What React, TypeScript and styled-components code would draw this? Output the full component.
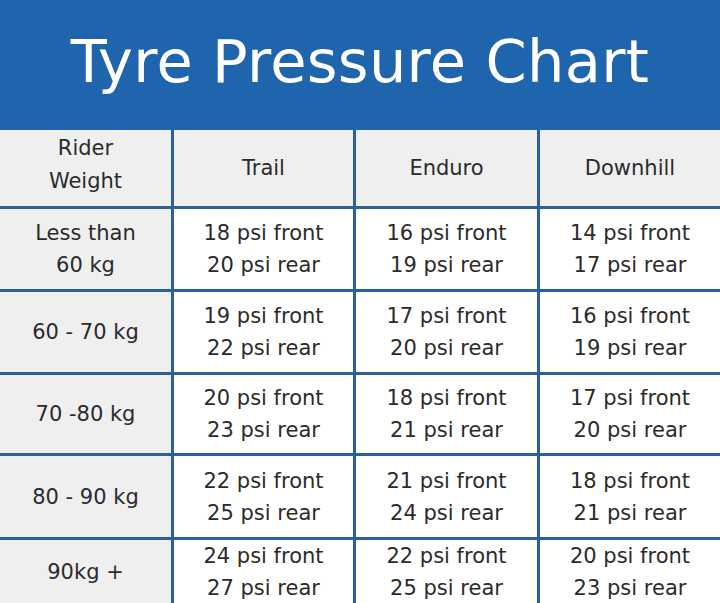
import React from "react";
import styled, { createGlobalStyle } from "styled-components";

const GlobalStyle = createGlobalStyle`
  html, body { margin: 0; padding: 0; background: #ffffff; }
  body { font-family: "DejaVu Sans", "Liberation Sans", sans-serif; }
  #root { width: 720px; height: 603px; overflow: hidden; }
`;

const Page = styled.div`
  width: 720px;
  height: 603px;
  display: flex;
  flex-direction: column;
  overflow: hidden;
`;

const TitleBar = styled.header`
  height: 130px;
  flex: none;
  background: #1e65ae;
  display: flex;
  align-items: center;
  justify-content: center;
  padding-bottom: 8px;
  box-sizing: border-box;
`;

const Title = styled.h1`
  margin: 0;
  color: #ffffff;
  font-size: 59px;
  font-weight: 400;
  letter-spacing: 0.3px;
  line-height: 1;
`;

const Grid = styled.div`
  display: grid;
  grid-template-columns: 171px 179px 181px 180px;
  grid-template-rows: 76px 80px 80px 78px 81px 63px;
  gap: 3px;
  background: #2a609c;
  flex: none;
`;

const Cell = styled.div<{ $shaded?: boolean; $tight?: boolean }>`
  background: ${(p) => (p.$shaded ? "#efeff0" : "#ffffff")};
  color: #2b2b2b;
  font-size: 21px;
  line-height: ${(p) => (p.$tight ? "33px" : "32px")};
  display: flex;
  flex-direction: column;
  align-items: center;
  justify-content: center;
  text-align: center;
  white-space: nowrap;
  padding-bottom: ${(p) => (p.$tight ? "6px" : "0")};
  box-sizing: border-box;
`;

const headers = ["Trail", "Enduro", "Downhill"];

const rows: { weight: string[]; values: [number, number][] }[] = [
  { weight: ["Less than", "60 kg"], values: [[18, 20], [16, 19], [14, 17]] },
  { weight: ["60 - 70 kg"], values: [[19, 22], [17, 20], [16, 19]] },
  { weight: ["70 -80 kg"], values: [[20, 23], [18, 21], [17, 20]] },
  { weight: ["80 - 90 kg"], values: [[22, 25], [21, 24], [18, 21]] },
  { weight: ["90kg +"], values: [[24, 27], [22, 25], [20, 23]] },
];

export default function App() {
  return (
    <>
      <GlobalStyle />
      <Page>
        <TitleBar>
          <Title>Tyre Pressure Chart</Title>
        </TitleBar>
        <Grid>
          <Cell $shaded $tight>
            <span>Rider</span>
            <span>Weight</span>
          </Cell>
          {headers.map((h) => (
            <Cell $shaded key={h}>
              {h}
            </Cell>
          ))}
          {rows.map((r, i) => (
            <React.Fragment key={i}>
              <Cell $shaded>
                {r.weight.map((w) => (
                  <span key={w}>{w}</span>
                ))}
              </Cell>
              {r.values.map(([front, rear], j) => (
                <Cell key={j}>
                  <span>{front} psi front</span>
                  <span>{rear} psi rear</span>
                </Cell>
              ))}
            </React.Fragment>
          ))}
        </Grid>
      </Page>
    </>
  );
}
